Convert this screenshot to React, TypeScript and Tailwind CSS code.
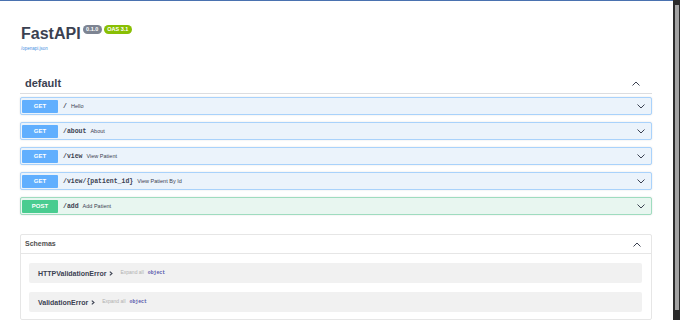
import React from "react";

/* ── Data ───────────────────────────────────────────────────────────── */
type Op = { method: "GET" | "POST"; path: string; summary: string };

const OPS: Op[] = [
  { method: "GET", path: "/", summary: "Hello" },
  { method: "GET", path: "/about", summary: "About" },
  { method: "GET", path: "/view", summary: "View Patient" },
  { method: "GET", path: "/view/{patient_id}", summary: "View Patient By Id" },
  { method: "POST", path: "/add", summary: "Add Patient" },
];

const SCHEMAS = ["HTTPValidationError", "ValidationError"];

const SANS = "font-['Liberation_Sans',Arial,sans-serif]";
const MONO = "font-['Liberation_Mono','DejaVu_Sans_Mono',monospace]";

/* ── Icons ──────────────────────────────────────────────────────────── */
function Chevron({ up = false }: { up?: boolean }) {
  return (
    <svg width="8" height="5" viewBox="0 0 8 5" className="flex-shrink-0">
      <path
        d={up ? "M0.5 4.5L4 1L7.5 4.5" : "M0.5 0.5L4 4L7.5 0.5"}
        stroke="#3b4151"
        strokeWidth="1"
        fill="none"
      />
    </svg>
  );
}

function SmallArrow() {
  return (
    <svg width="4" height="5" viewBox="0 0 4 5" className="flex-shrink-0">
      <path d="M0.8 0.6L3 2.5L0.8 4.4" stroke="#3b4151" strokeWidth="1.1" fill="none" />
    </svg>
  );
}

/* ── Operation row ──────────────────────────────────────────────────── */
function OpRow({ op }: { op: Op }) {
  const get = op.method === "GET";
  return (
    <div
      className={`flex items-center h-[18px] rounded-[2px] border px-[1px] shadow-[0_0_2px_rgba(0,0,0,0.12)] ${
        get ? "bg-[#ebf3fb] border-[#a9d2fb]" : "bg-[#e8f6f0] border-[#9fdcbf]"
      }`}
    >
      <div
        className={`w-[36px] h-[13px] rounded-[1px] flex items-center justify-center text-white font-bold text-[6px] leading-none ${SANS} ${
          get ? "bg-[#61affe]" : "bg-[#49cc90]"
        }`}
      >
        {op.method}
      </div>
      <div className="flex items-baseline ml-[5px] translate-y-[0.5px]">
        <span className={`text-[6.5px] font-bold text-[#3b4151] ${MONO}`}>{op.path}</span>
        <span className={`ml-[4px] text-[5.5px] text-[#3b4151] ${SANS}`}>{op.summary}</span>
      </div>
      <div className="ml-auto mr-[5px] flex items-center">
        <Chevron />
      </div>
    </div>
  );
}

/* ── Schema row ─────────────────────────────────────────────────────── */
function SchemaRow({ name }: { name: string }) {
  return (
    <div className="flex items-center h-[20px] bg-[#f1f1f1] rounded-[2px] pl-[9px]">
      <span className={`text-[7px] leading-none font-bold text-[#3b4151] ${SANS}`}>{name}</span>
      <span className="ml-[3px] flex items-center">
        <SmallArrow />
      </span>
      <div className="flex items-baseline ml-[7px]">
        <span className={`text-[5px] text-[#b0b0b0] ${SANS}`}>Expand all</span>
        <span className={`ml-[4px] text-[4.8px] font-bold text-[#55a] ${MONO}`}>object</span>
      </div>
    </div>
  );
}

/* ── Page ───────────────────────────────────────────────────────────── */
export default function App() {
  return (
    <div className="w-[680px] h-[320px] overflow-hidden flex bg-white">
      <div className="w-[673px] h-full flex flex-col border-t border-[#4a72b0] px-[20px] pr-[21px]">
        {/* Info */}
        <div className="flex items-start mt-[24px] ml-[1px]">
          <h1 className={`text-[16px] leading-[18px] font-bold text-[#3b4151] ${SANS}`}>FastAPI</h1>
          <span className={`ml-[2px] h-[9px] px-[3.5px] rounded-full bg-[#7d8492] text-white text-[5.5px] font-bold flex items-center ${SANS}`}>
            0.1.0
          </span>
          <span className={`ml-[2px] h-[9px] px-[3.5px] rounded-full bg-[#89bf04] text-white text-[5.5px] font-bold flex items-center ${SANS}`}>
            OAS 3.1
          </span>
        </div>
        <div className={`mt-[3px] ml-[1px] text-[4.5px] leading-[6px] text-[#4990e2] ${SANS}`}>/openapi.json</div>

        {/* Tag section */}
        <div className="mt-[21px] h-[21px] flex items-center justify-between border-b border-[#dcdde0] pl-[5px] pr-[12px]">
          <span className={`text-[11px] font-bold text-[#3b4151] ${SANS}`}>default</span>
          <Chevron up />
        </div>
        <div className="mt-[3px] flex flex-col gap-[7px]">
          {OPS.map((op) => (
            <OpRow key={op.path} op={op} />
          ))}
        </div>

        {/* Schemas */}
        <div className="mt-[19px] border border-[#e6e6e6] rounded-[2px] flex-1">
          <div className="h-[19px] flex items-center justify-between border-b border-[#e6e6e6] pl-[4px] pr-[10px]">
            <span className={`text-[7px] font-bold text-[#505050] ${SANS}`}>Schemas</span>
            <Chevron up />
          </div>
          <div className="flex flex-col gap-[9px] pt-[9px] pl-[8px] pr-[9px]">
            {SCHEMAS.map((s) => (
              <SchemaRow key={s} name={s} />
            ))}
          </div>
        </div>
      </div>

      {/* Scrollbar */}
      <div className="w-[7px] h-full flex bg-[#2b2b2b]">
        <div className="ml-[2px] w-[4px] mt-[5px] h-[305px] bg-[#a3a3a3]" />
      </div>
    </div>
  );
}
